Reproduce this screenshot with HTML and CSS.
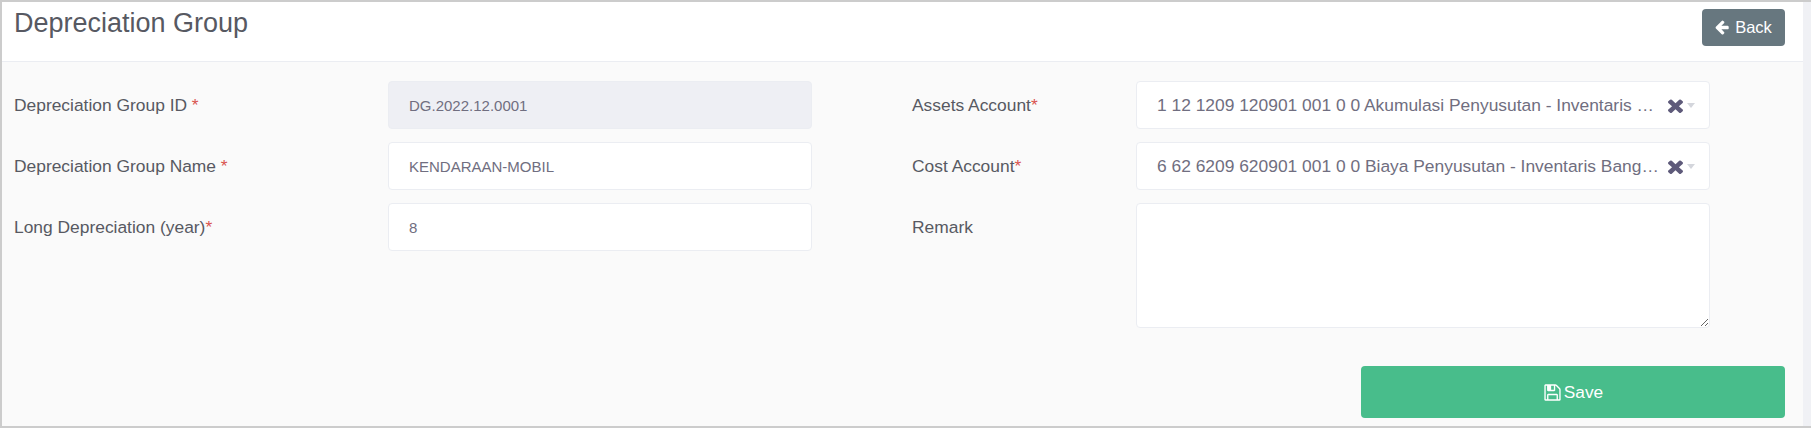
FILE: index.html
```html
<!DOCTYPE html>
<html lang="en">
<head>
<meta charset="utf-8">
<title>Depreciation Group</title>
<link rel="stylesheet" href="styles.css">
</head>
<body>
<div class="frame">
  <main class="panel">
    <header class="panel-head">
      <h3 class="panel-title">Depreciation Group</h3>
      <a class="btn btn-back" href="#">
        <svg class="ico ico-back" viewBox="0 0 1792 1792"><path d="M1536 896v128q0 53-32.500 90.500t-84.500 37.500h-704l293 294q38 36 38 90t-38 90l-75 76q-37 37-90 37-52 0-91-37l-651-652q-37-37-37-90 0-52 37-91l651-650q38-38 91-38 52 0 90 38l75 74q38 38 38 91t-38 91l-293 293h704q52 0 84.500 37.500t32.500 90.500z"/></svg>
        <span>Back</span>
      </a>
    </header>
    <form class="panel-body">
      <div class="columns">
        <div class="col col-left">
          <div class="row">
            <label class="label">Depreciation Group ID <em>*</em></label>
            <input class="field field-disabled" type="text" value="DG.2022.12.0001" disabled>
          </div>
          <div class="row">
            <label class="label">Depreciation Group Name <em>*</em></label>
            <input class="field" type="text" value="KENDARAAN-MOBIL">
          </div>
          <div class="row">
            <label class="label">Long Depreciation (year)<em>*</em></label>
            <input class="field" type="text" value="8">
          </div>
        </div>
        <div class="col col-right">
          <div class="row">
            <label class="label">Assets Account<em>*</em></label>
            <div class="select">
              <span class="select-text">1 12 1209 120901 001 0 0 Akumulasi Penyusutan - Inventaris Bangunan</span>
              <svg class="ico ico-clear" viewBox="110 238 1188 1316" preserveAspectRatio="none"><path d="M1298 1322q0 40-28 68l-136 136q-28 28-68 28t-68-28l-294-294-294 294q-28 28-68 28t-68-28l-136-136q-28-28-28-68t28-68l294-294-294-294q-28-28-28-68t28-68l136-136q28-28 68-28t68 28l294 294 294-294q28-28 68-28t68 28l136 136q28 28 28 68t-28 68l-294 294 294 294q28 28 28 68z"/></svg>
              <i class="caret"></i>
            </div>
          </div>
          <div class="row">
            <label class="label">Cost Account<em>*</em></label>
            <div class="select">
              <span class="select-text">6 62 6209 620901 001 0 0 Biaya Penyusutan - Inventaris Bangunan</span>
              <svg class="ico ico-clear" viewBox="110 238 1188 1316" preserveAspectRatio="none"><path d="M1298 1322q0 40-28 68l-136 136q-28 28-68 28t-68-28l-294-294-294 294q-28 28-68 28t-68-28l-136-136q-28-28-28-68t28-68l294-294-294-294q-28-28-28-68t28-68l136-136q28-28 68-28t68 28l294 294 294-294q28-28 68-28t68 28l136 136q28 28 28 68t-28 68l-294 294 294 294q28 28 28 68z"/></svg>
              <i class="caret"></i>
            </div>
          </div>
          <div class="row">
            <label class="label">Remark</label>
            <textarea class="field area"></textarea>
          </div>
        </div>
      </div>
      <div class="actions">
        <button class="btn btn-save" type="button">
          <svg class="ico ico-save" viewBox="0 0 1792 1792"><path d="M512 1536h768v-384h-768v384zm896 0h128v-896q0-14-10-38.500t-20-34.500l-281-281q-10-10-34-20t-39-10v416q0 40-28 68t-68 28h-576q-40 0-68-28t-28-68v-416h-128v1280h128v-416q0-40 28-68t68-28h832q40 0 68 28t28 68v416zm-384-928v-320q0-13-9.500-22.500t-22.500-9.500h-192q-13 0-22.500 9.500t-9.500 22.500v320q0 13 9.500 22.500t22.500 9.500h192q13 0 22.500-9.500t9.500-22.500zm640 32v928q0 40-28 68t-68 28h-1344q-40 0-68-28t-28-68v-1344q0-40 28-68t68-28h928q40 0 88 20t76 48l280 280q28 28 48 76t20 88z"/></svg>
          <span>Save</span>
        </button>
      </div>
    </form>
  </main>
</div>
</body>
</html>
```

FILE: styles.css
```css
* { box-sizing: border-box; }
html, body { margin: 0; padding: 0; height: 100%; overflow: hidden; }
body { font-family: "Liberation Sans", Arial, sans-serif; color: #575962; background: #f0f1f5; }
.frame { height: 428px; border-top: 2px solid #cccccc; border-left: 2px solid #cccccc; border-bottom: 2px solid #cccccc; padding-right: 8px; display: flex; }
.panel { flex: 1; display: flex; flex-direction: column; background: #fafafa; }
.panel-head { height: 60px; flex: none; background: #ffffff; border-bottom: 1px solid #ebedf2; display: flex; justify-content: space-between; align-items: flex-start; padding: 7px 18px 0 12px; }
.panel-title { margin: -1px 0 0; font-size: 27px; font-weight: 400; line-height: 30px; color: #575962; }
.btn { display: flex; align-items: center; justify-content: center; color: #ffffff; border: 0; border-radius: 4px; font-family: inherit; text-decoration: none; }
.btn-back { width: 83px; height: 37px; background: #67777f; font-size: 16.5px; gap: 4px; padding-bottom: 1px; }
.ico { fill: currentColor; display: block; flex: none; }
.ico-back { width: 16px; height: 16px; }
.panel-body { flex: 1; padding: 19px 18px 0 12px; display: flex; flex-direction: column; }
.columns { display: flex; height: 285px; }
.col { display: flex; flex-direction: column; gap: 13px; flex: none; }
.col-left { width: 798px; }
.col-right { width: 898px; padding-left: 100px; }
.row { display: flex; align-items: flex-start; }
.label { font-size: 17.4px; line-height: 48px; height: 48px; flex: none; color: #575962; }
.label em { color: #d9534f; font-style: normal; }
.col-left .label { width: 374px; }
.col-right .label { width: 224px; }
.field { display: block; flex: none; width: 424px; height: 48px; border: 1px solid #ebedf2; border-radius: 4px; background: #ffffff; padding: 0 20px; font: 15px "Liberation Sans", Arial, sans-serif; color: #706e80; }
.field-disabled { background: #eeeff4; opacity: 1; -webkit-text-fill-color: #706e80; }
.area { width: 574px; height: 125px; resize: vertical; }
.select { flex: none; width: 574px; height: 48px; border: 1px solid #ebedf2; border-radius: 4px; background: #ffffff; padding: 0 14px 0 20px; display: flex; align-items: center; }
.select-text { flex: 1; min-width: 0; font-size: 17.4px; color: #706e80; white-space: nowrap; overflow: hidden; text-overflow: ellipsis; }
.ico-clear { width: 15px; height: 15px; margin-left: 3px; color: #5e5a7a; }
.caret { width: 0; height: 0; margin-left: 4px; border: 4px solid transparent; border-top: 5px solid #d4d6dc; border-bottom: 0; }
.actions { display: flex; justify-content: flex-end; }
.btn-save { width: 424px; height: 52px; background: #48bd8b; font-size: 17.3px; gap: 2px; font-weight: 400; }
.ico-save { width: 19px; height: 19px; }
```
